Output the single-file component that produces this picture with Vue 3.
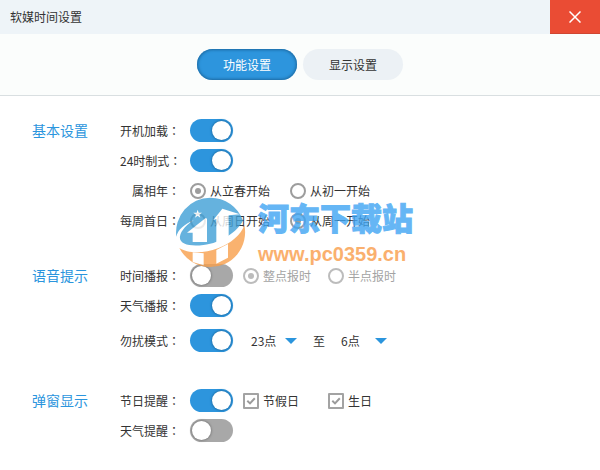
<template>
  <main class="settings">
    <header class="titlebar">
      <h1 class="title">软媒时间设置</h1>
      <button class="close" type="button" aria-label="关闭">
        <svg width="12" height="12" viewBox="0 0 12 12" aria-hidden="true">
          <path d="M0.5 0.5L11.5 11.5M11.5 0.5L0.5 11.5" stroke="#fff" stroke-width="1.5" />
        </svg>
      </button>
    </header>

    <nav class="tabs">
      <button
        v-for="tab in tabs"
        :key="tab"
        type="button"
        class="tab"
        :class="{ active: tab === activeTab }"
        @click="activeTab = tab"
      >
        {{ tab }}
      </button>
    </nav>

    <div class="content">
      <section v-for="group in groups" :key="group.title" class="group">
        <h2 class="group-title">{{ group.title }}</h2>
        <div class="rows">
          <div
            v-for="row in group.rows"
            :key="row.id"
            class="row"
            :class="{ spaced: row.range }"
          >
            <label class="row-label" :for="row.id">{{ row.label }}<span class="colon">：</span></label>
            <input
              v-if="row.toggle"
              :id="row.id"
              v-model="row.on"
              class="switch"
              type="checkbox"
              role="switch"
            />
            <div v-if="row.options" class="options" :class="{ wide: !row.toggle }">
              <label
                v-for="(option, i) in row.options"
                :key="option"
                class="option"
                :class="{ disabled: row.toggle && !row.on }"
              >
                <input
                  :id="!row.toggle && i === 0 ? row.id : undefined"
                  v-model="row.value"
                  class="radio"
                  type="radio"
                  :name="row.id + '-option'"
                  :value="option"
                  :disabled="row.toggle && !row.on"
                />
                {{ option }}
              </label>
            </div>
            <div v-if="row.checks" class="options">
              <label v-for="check in row.checks" :key="check.label" class="option">
                <span class="check">
                  <input v-model="check.on" type="checkbox" />
                  <svg v-if="check.on" width="16" height="16" viewBox="0 0 16 16" aria-hidden="true">
                    <path d="M4.3 7.8L7 10.4L11.8 5.2" fill="none" stroke="#9b9b9b" stroke-width="2" />
                  </svg>
                </span>
                {{ check.label }}
              </label>
            </div>
            <div v-if="row.range" class="range">
              <span class="picker">
                <select v-model="row.from" aria-label="开始时间">
                  <option v-for="h in 24" :key="h" :value="h - 1">{{ h - 1 }}点</option>
                </select>
                <svg width="12" height="6" viewBox="0 0 12 6" aria-hidden="true">
                  <path d="M0 0H12L6 6Z" fill="#2b95dd" />
                </svg>
              </span>
              <span>至</span>
              <span class="picker">
                <select v-model="row.to" aria-label="结束时间">
                  <option v-for="h in 24" :key="h" :value="h - 1">{{ h - 1 }}点</option>
                </select>
                <svg width="12" height="6" viewBox="0 0 12 6" aria-hidden="true">
                  <path d="M0 0H12L6 6Z" fill="#2b95dd" />
                </svg>
              </span>
            </div>
          </div>
        </div>
      </section>
    </div>

    <div class="watermark">
      <svg width="80" height="78" viewBox="0 0 240 234" aria-hidden="true">
        <path d="M13 128A104 104 0 0 1 115 11A104 104 0 0 1 213 80C196 112 150 146 94 153C54 158 20 151 24 127C27 109 45 91 66 78C36 91 17 108 13 128Z" fill="#3f9fd6" />
        <path d="M217 93A104 104 0 0 1 115 219A104 104 0 0 1 22 162C45 177 92 181 138 163C176 148 207 123 217 93Z" fill="#f8a04c" />
        <path d="M45 116L101 72L105 74V144H62V116ZM133 150V75L124 78L151 44L204 61L170 64V137Z" fill="#fff" />
        <path d="M62 175L95 178V214L62 204ZM133 168L168 150V191L133 209Z" fill="#fff" />
        <path d="M77 47L80 56L90 56L82 62L85 71L77 65L69 71L72 62L64 56L74 56Z" fill="#fff" />
      </svg>
      <div class="brand">
        <span class="brand-name">河东下载站</span>
        <span class="brand-url">www.pc0359.cn</span>
      </div>
    </div>
  </main>
</template>

<script setup>
import { reactive, ref } from "vue";

const tabs = ["功能设置", "显示设置"];
const activeTab = ref("功能设置");

const groups = reactive([
  {
    title: "基本设置",
    rows: [
      { id: "autostart", label: "开机加载", toggle: true, on: true },
      { id: "hour24", label: "24时制式", toggle: true, on: true },
      { id: "zodiac", label: "属相年", options: ["从立春开始", "从初一开始"], value: "从立春开始" },
      { id: "weekday", label: "每周首日", options: ["从周日开始", "从周一开始"], value: "从周一开始" },
    ],
  },
  {
    title: "语音提示",
    rows: [
      {
        id: "timeVoice",
        label: "时间播报",
        toggle: true,
        on: false,
        options: ["整点报时", "半点报时"],
        value: "整点报时",
      },
      { id: "weatherVoice", label: "天气播报", toggle: true, on: true },
      { id: "quiet", label: "勿扰模式", toggle: true, on: true, range: true, from: 23, to: 6 },
    ],
  },
  {
    title: "弹窗显示",
    rows: [
      {
        id: "holiday",
        label: "节日提醒",
        toggle: true,
        on: true,
        checks: [
          { label: "节假日", on: true },
          { label: "生日", on: true },
        ],
      },
      { id: "weatherPopup", label: "天气提醒", toggle: true, on: false },
    ],
  },
]);
</script>

<style>
body {
  background: #fff;
}
</style>

<style scoped>
.settings {
  position: relative;
  min-height: 100vh;
  background: #fff;
  color: #333;
  font-family: "Noto Sans CJK SC", sans-serif;
  font-size: 12px;
  line-height: 18px;
}

button,
select {
  font: inherit;
  color: inherit;
  border: none;
  padding: 0;
  cursor: pointer;
}

input {
  appearance: none;
  box-sizing: border-box;
  flex: none;
  margin: 0;
}

.titlebar {
  display: flex;
  align-items: stretch;
  justify-content: space-between;
  height: 34px;
  padding-left: 10px;
  background: #eef4f8;
}

.title {
  margin: 0;
  font-size: 12px;
  font-weight: normal;
  line-height: 34px;
}

.close {
  display: flex;
  align-items: center;
  justify-content: center;
  width: 50px;
  background: #ea4c34;
  border-bottom: 1px solid #cf4632;
}

.tabs {
  display: flex;
  justify-content: center;
  gap: 6px;
  padding: 15px 0;
  background: #fbfdfc;
  border-bottom: 1px solid #d9dfe1;
}

.tab {
  width: 100px;
  height: 31px;
  border-radius: 16px;
  background: #ecf1f5;
}

.tab.active {
  background: #2d95dd;
  color: #fff;
  box-shadow: inset 0 0 3px 1px #1c689f;
}

.content {
  display: flex;
  flex-direction: column;
  gap: 32px;
  padding: 23px 32px;
}

.group {
  display: flex;
  gap: 32px;
}

.group-title {
  flex: none;
  width: 56px;
  margin: 0;
  color: #2b95dd;
  font-size: 14px;
  font-weight: normal;
  line-height: 23px;
}

.rows {
  display: flex;
  flex: 1;
  flex-direction: column;
  gap: 7px;
}

.row {
  display: flex;
  align-items: center;
  height: 23px;
}

.row.spaced {
  margin: 5px 0;
}

.row-label {
  width: 60px;
  margin-right: 10px;
  text-align: right;
  white-space: nowrap;
}

.colon {
  font-family: "Noto Sans CJK TC", sans-serif;
}

.switch {
  display: flex;
  align-items: center;
  width: 43px;
  height: 23px;
  padding: 0 2px;
  border-radius: 12px;
  background: #a8a8a8;
  cursor: pointer;
}

.switch::before {
  content: "";
  width: 19px;
  height: 19px;
  border-radius: 50%;
  background: #fff;
  box-shadow: 0 0 2px 1px #858585;
}

.switch:checked {
  justify-content: flex-end;
  background: #2d95dd;
}

.switch:checked::before {
  box-shadow: 0 0 2px 1px #2277b3;
}

.options {
  display: flex;
}

.switch + .options {
  margin-left: 10px;
}

.option {
  display: flex;
  align-items: center;
  gap: 4px;
  min-width: 85px;
  white-space: nowrap;
}

.wide .option {
  min-width: 100px;
}

.option.disabled {
  color: #a3a3a3;
}

.radio {
  display: grid;
  place-items: center;
  width: 16px;
  height: 16px;
  border: 2px solid #9d9d9d;
  border-radius: 50%;
  background: #fff;
}

.radio:checked::before {
  content: "";
  width: 6px;
  height: 6px;
  border-radius: 50%;
  background: #9d9d9d;
}

.radio:disabled {
  border-color: #bcbcbc;
}

.radio:disabled::before {
  background: #bcbcbc;
}

.check {
  display: grid;
}

.check input,
.check svg {
  grid-area: 1 / 1;
  width: 16px;
  height: 16px;
}

.check input {
  border: 2px solid #a3a3a3;
  border-radius: 1px;
}

.check svg,
.picker svg {
  pointer-events: none;
}

.range {
  display: flex;
  align-items: center;
  gap: 16px;
  margin-left: 18px;
}

.picker {
  display: grid;
  align-items: center;
  width: 46px;
}

.picker select,
.picker svg {
  grid-area: 1 / 1;
}

.picker select {
  appearance: none;
  background: transparent;
}

.picker svg {
  justify-self: end;
}

/* translucent site mark floating over the form */
.watermark {
  position: absolute;
  top: 194px;
  left: 172px;
  display: flex;
  gap: 6px;
  opacity: 0.8;
  pointer-events: none;
}

.brand {
  display: flex;
  flex-direction: column;
  padding-top: 6px;
}

.brand-name {
  color: #3fa5f3;
  font-size: 31px;
  font-weight: 900;
  line-height: 34px;
  -webkit-text-stroke: 1px #3fa5f3;
}

.brand-url {
  color: #fa9d4b;
  font-family: "Liberation Sans", sans-serif;
  font-size: 20px;
  font-weight: bold;
  line-height: 40px;
}
</style>
